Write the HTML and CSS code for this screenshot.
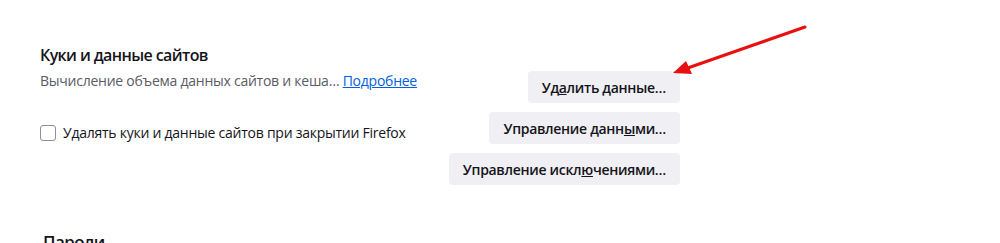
FILE: index.html
```html
<!DOCTYPE html>
<html lang="ru">
<head>
<meta charset="utf-8">
<link rel="stylesheet" href="styles.css">
</head>
<body>
<div class="page">
  <section class="section">
    <h2 class="heading">Куки и данные сайтов</h2>
    <div class="row">
      <div class="left">
        <div class="desc">Вычисление объема данных сайтов и кеша… <a class="link" href="#">Подробнее</a></div>
        <label class="check"><span class="box"></span>Удалять куки и данные сайтов при закрытии Firefox</label>
      </div>
      <div class="buttons">
        <button class="btn">Уд<u>а</u>лить данные…</button>
        <button class="btn">Управление данн<u>ы</u>ми…</button>
        <button class="btn">Управление искл<u>ю</u>чениями…</button>
      </div>
    </div>
  </section>
  <h2 class="heading next">Пароли</h2>
</div>
<svg class="arrow" width="160" height="70" viewBox="0 0 160 70">
  <line x1="147" y1="23" x2="24" y2="66" stroke="#e8100f" stroke-width="3" stroke-linecap="round"/>
  <polygon points="15,69 28,57 34,70" fill="#e8100f"/>
</svg>
</body>
</html>
```
FILE: styles.css
```css
html, body {
  margin: 0;
  padding: 0;
  background: #fff;
  overflow: hidden;
}
body {
  font-family: "Open Sans", "Noto Sans", sans-serif;
  color: #15141a;
  position: relative;
  height: 243px;
}
.page {
  padding: 44px 0 0 40px;
  width: 640px;
}
.heading {
  margin: 0;
  font-size: 16px;
  font-weight: 600;
  letter-spacing: -0.6px;
  line-height: 22px;
}
.row {
  display: flex;
  margin-top: 5px;
}
.left {
  flex: 1;
  display: flex;
  flex-direction: column;
  gap: 32px;
}
.desc {
  font-size: 14px;
  letter-spacing: -0.25px;
  line-height: 20px;
  color: #5b5b66;
}
.link {
  color: #0061e0;
  text-decoration: underline;
}
.check {
  display: flex;
  align-items: center;
  gap: 7px;
  font-size: 14px;
  letter-spacing: -0.25px;
  line-height: 20px;
  color: #15141a;
}
.box {
  border: 1px solid #8f8f9d;
  border-radius: 3px;
  box-sizing: border-box;
  width: 16px;
  height: 16px;
}
.buttons {
  display: flex;
  flex-direction: column;
  align-items: flex-end;
  gap: 9px;
}
.btn {
  font-family: inherit;
  font-size: 14px;
  font-weight: 600;
  letter-spacing: -0.3px;
  color: #15141a;
  background: #f0f0f4;
  border: none;
  border-radius: 4px;
  height: 32px;
  padding: 0 14px;
}
.btn u {
  text-decoration-thickness: 1px;
}
.next {
  margin-top: 46px;
  margin-left: 3px;
  font-size: 17px;
}
.arrow {
  position: absolute;
  left: 658px;
  top: 4px;
}
```
